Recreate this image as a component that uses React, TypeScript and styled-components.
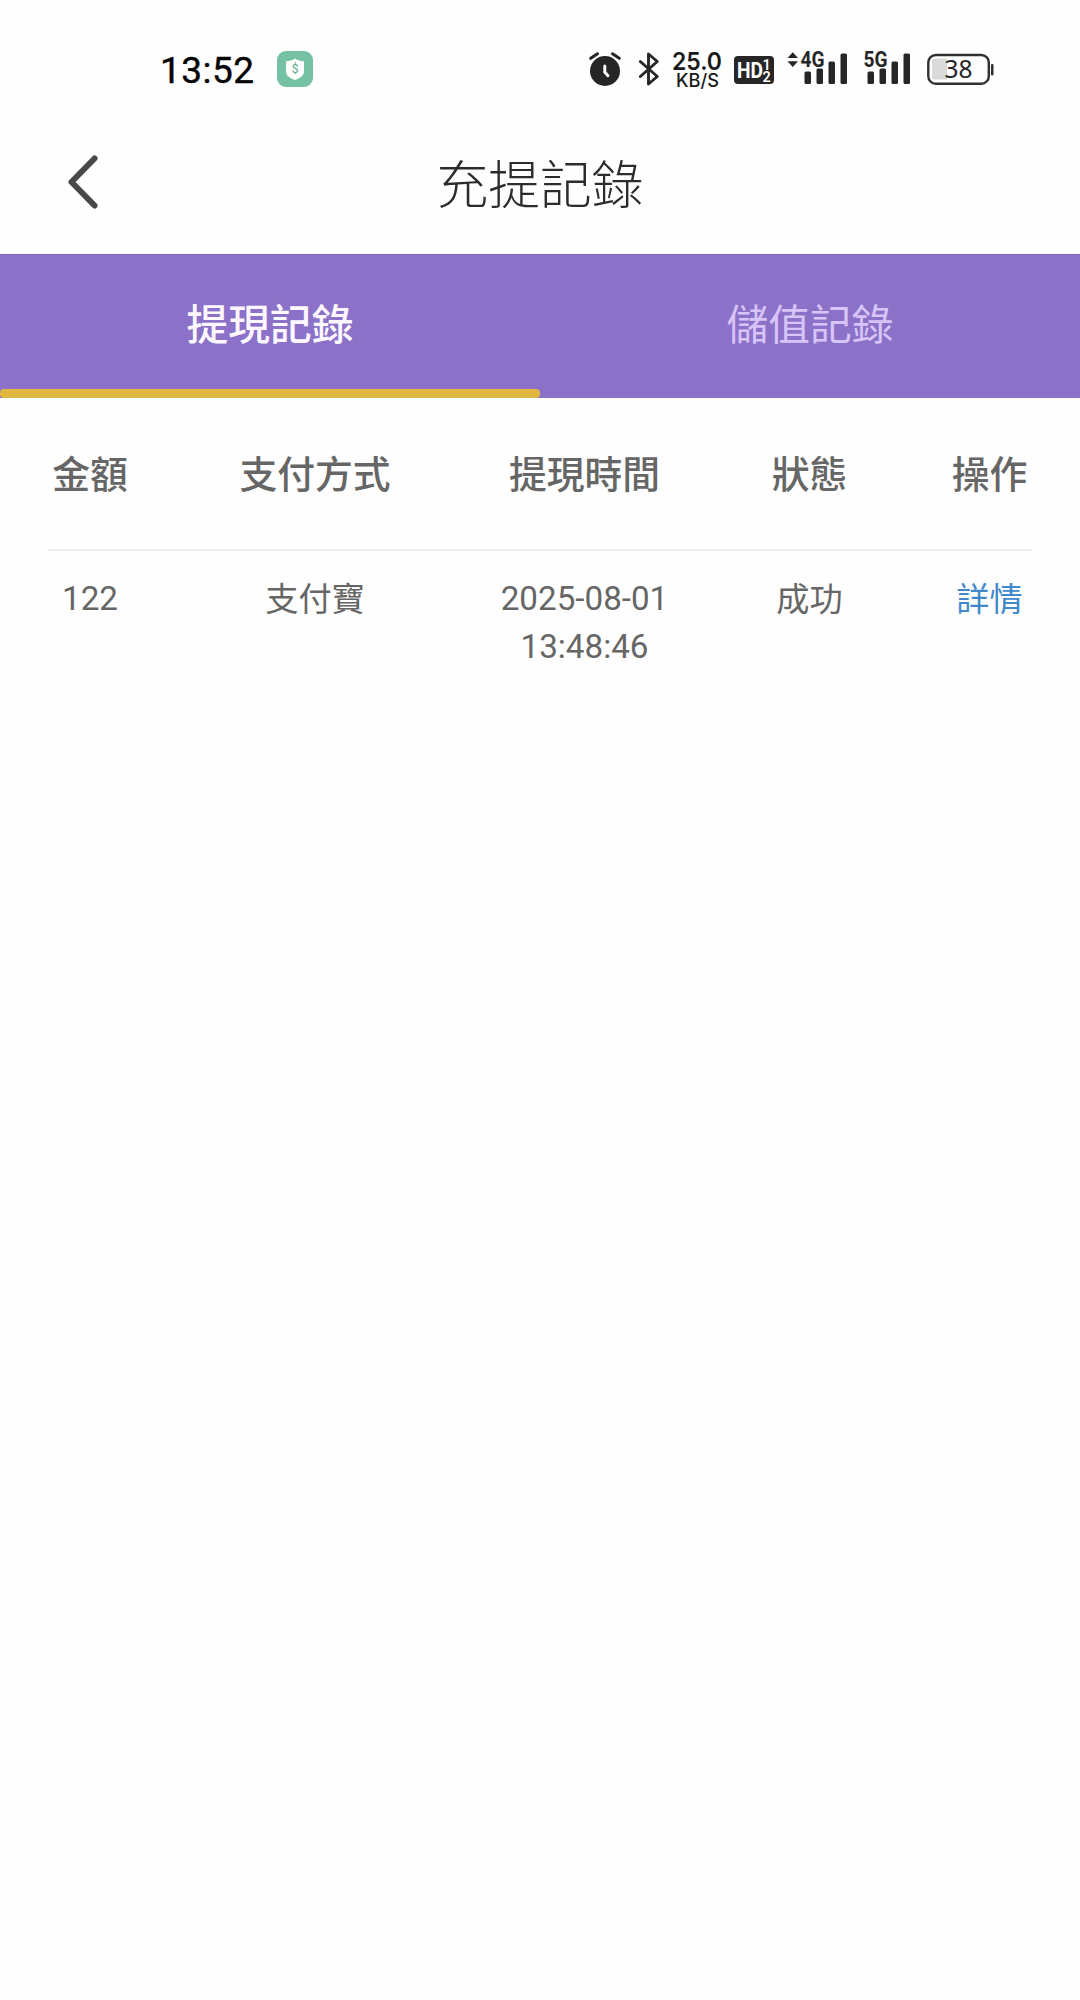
import React from "react";
import styled, { createGlobalStyle } from "styled-components";

const GlobalStyle = createGlobalStyle`
  * { box-sizing: border-box; }
  body {
    margin: 0;
    background: #fefefe;
    font-family: Roboto, "Noto Sans CJK TC", sans-serif;
  }
`;

const Screen = styled.div`
  width: 1080px;
  min-height: 2000px;
  background: #fefefe;
  display: flex;
  flex-direction: column;
`;

const StatusBar = styled.header`
  height: 104px;
  padding: 51px 86px 17px 161px;
  display: flex;
  justify-content: space-between;
  align-items: center;
  color: #1f1f1f;
`;

const StatusGroup = styled.div<{ $gap: number; $indent?: number }>`
  display: flex;
  align-items: center;
  height: 36px;
  gap: ${(p) => p.$gap}px;
  margin-left: ${(p) => p.$indent ?? 0}px;

  svg {
    display: block;
    flex: none;
    overflow: visible;
  }
`;

const NavBar = styled.div`
  height: 150px;
  padding: 0 67px;
  display: grid;
  grid-template-columns: 60px 1fr 60px;
  align-items: center;
`;

const BackButton = styled.button`
  width: 32px;
  height: 56px;
  margin-bottom: -6px;
  padding: 0;
  border: 0;
  background: none;

  svg {
    display: block;
  }
`;

const Title = styled.h1`
  margin: 15px 0 0;
  text-align: center;
  font-size: 51.8px;
  line-height: 76px;
  font-weight: 300;
  color: #2c2c2c;
`;

const Tabs = styled.nav`
  height: 144px;
  display: grid;
  grid-template-columns: 1fr 1fr;
  background: #8b71c7;
  border-top: 1px solid #8168b4;
`;

const Tab = styled.div<{ $active?: boolean }>`
  display: flex;
  flex-direction: column;
  justify-content: space-between;
  padding-top: 40px;
  text-align: center;
  font-size: 41.8px;
  line-height: 62px;
  font-weight: ${(p) => (p.$active ? 500 : 400)};
  color: ${(p) => (p.$active ? "#fdf8ff" : "#d7c4f8")};

  &::after {
    content: "";
    height: 9px;
    border-radius: 4px;
    background: ${(p) => (p.$active ? "#e0b840" : "transparent")};
  }
`;

const Table = styled.section`
  padding: 0 48px;
`;

const Row = styled.div`
  display: grid;
  grid-template-columns: 84px 366px 173px 277px 83px;
  text-align: center;
  color: #666;
`;

const HeadRow = styled(Row)`
  height: 153px;
  padding-top: 49px;
  border-bottom: 2px solid #f0f0f0;
  font-size: 37.8px;
  line-height: 56px;
  font-weight: 500;
  white-space: nowrap;
`;

const BodyRow = styled(Row)`
  padding-top: 24px;
  font-size: 33.2px;
  line-height: 48px;
`;

const Label = styled.span`
  padding-top: 1px;
`;

const DetailLink = styled.a`
  padding-top: 1px;
  color: #4189cb;
`;

const FACE = 'Roboto, "Noto Sans", sans-serif';

function ShieldBadge() {
  return (
    <svg width="36" height="36" viewBox="0 0 36 36">
      <rect width="36" height="36" rx="9" fill="#75c1a4" />
      <path d="M18 7.5c2.6 1.8 5.4 2.6 9 2.8v10c0 4.300-3.700 6.800-9 8.700-5.300-1.900-9-4.400-9-8.700v-10c3.600-.2 6.400-1 9-2.800z" fill="#fff" />
      <text x="18" y="22" textAnchor="middle" fontFamily={FACE} fontSize="12" fill="#55a883">$</text>
    </svg>
  );
}

function Clock() {
  return (
    <svg width="92" height="36" viewBox="0 0 92 36">
      <text x="-1" y="31.700" fontFamily={FACE} fontSize="37" fontWeight="400" fill="#050505" stroke="#050505" strokeWidth="0.400" textLength="94" lengthAdjust="spacing">13:52</text>
    </svg>
  );
}

function Alarm() {
  return (
    <svg width="32" height="36" viewBox="0 0 32 36" fill="none" strokeLinecap="round">
      <circle cx="16" cy="20" r="15" fill="#262626" />
      <path d="M1.700 7.300 8.500 2.800M23.500 2.800l6.800 4.500" stroke="#fefefe" strokeWidth="6" />
      <path d="M1.700 7.300 8.500 2.800M23.500 2.800l6.800 4.500" stroke="#262626" strokeWidth="3" />
      <path d="M15.800 15v6.200l3.200 3.500" stroke="#fff" strokeWidth="3" strokeLinejoin="round" />
    </svg>
  );
}

function Bluetooth() {
  return (
    <svg width="20" height="36" viewBox="0 0 20 36" fill="none" stroke="#262626" strokeWidth="2.900" strokeLinecap="round" strokeLinejoin="round">
      <path d="M1.300 10.500 18.300 25.500 9.500 33V3l8.800 7.500L1.300 25.500" />
    </svg>
  );
}

function NetSpeed() {
  return (
    <svg width="50" height="36" viewBox="0 0 50 36" fontFamily={'Inter, sans-serif'} fill="#1a1a1a">
      <text x="0" y="19.300" fontSize="24.500" fontWeight="600" textLength="50" lengthAdjust="spacingAndGlyphs">25.0</text>
      <text x="4" y="36" fontSize="18.500" fontWeight="500" textLength="43" lengthAdjust="spacingAndGlyphs">KB/S</text>
    </svg>
  );
}

function HdBadge() {
  return (
    <svg width="40" height="36" viewBox="0 0 40 36" fontFamily={FACE} fill="#fff">
      <rect y="5" width="40" height="28" rx="4" fill="#262626" />
      <text x="3" y="27" fontSize="22.500" fontWeight="700" textLength="26" lengthAdjust="spacingAndGlyphs">HD</text>
      <text x="28.500" y="19" fontSize="14.500" fontWeight="600">1</text>
      <text x="28.500" y="30.700" fontSize="14.500" fontWeight="600">2</text>
    </svg>
  );
}

function Signal({ label, arrows }: { label: string; arrows?: boolean }) {
  return (
    <svg width="47" height="36" viewBox="0 0 47 36" fill="#262626">
      {arrows && <path d="M-13.500 7h10.500L-8.250 1.200zM-13.500 10.300h10.500l-5.250 5.700z" />}
      <rect x="3.500" y="20.500" width="6.500" height="12.500" rx="1.500" />
      <rect x="15.500" y="17.500" width="6.500" height="15.500" rx="1.500" />
      <rect x="27.500" y="10.500" width="6.500" height="22.500" rx="1.500" />
      <rect x="39.500" y="2.500" width="6.500" height="30.500" rx="1.500" />
      <text x="-0.500" y="16.200" fontFamily={FACE} fontSize="21.500" fontWeight="700" stroke="#fefefe" strokeWidth="2" paintOrder="stroke" textLength="24" lengthAdjust="spacingAndGlyphs">{label}</text>
    </svg>
  );
}

function Battery() {
  return (
    <svg width="67" height="36" viewBox="0 0 67 36">
      <rect x="1.300" y="4" width="60.500" height="28.700" rx="7.500" fill="none" stroke="#303030" strokeWidth="2.400" />
      <path d="M8 7.500h12v21H8a3 3 0 0 1-3-3v-15a3 3 0 0 1 3-3z" fill="#dadada" />
      <rect x="64" y="13" width="2.500" height="11.500" rx="1" fill="#303030" />
      <text x="17.500" y="26.500" fontFamily={'"Noto Sans", sans-serif'} fontSize="24.500" fill="#262626" textLength="28" lengthAdjust="spacingAndGlyphs">38</text>
    </svg>
  );
}

const HEADINGS = ["金額", "支付方式", "提現時間", "狀態", "操作"];

export default function App() {
  return (
    <Screen>
      <GlobalStyle />
      <StatusBar>
        <StatusGroup $gap={24}>
          <Clock />
          <ShieldBadge />
        </StatusGroup>
        <StatusGroup $gap={13}>
          <StatusGroup $gap={18}>
            <Alarm />
            <Bluetooth />
          </StatusGroup>
          <StatusGroup $gap={12}>
            <NetSpeed />
            <HdBadge />
          </StatusGroup>
          <StatusGroup $gap={16} $indent={14}>
            <Signal label="4G" arrows />
            <Signal label="5G" />
            <Battery />
          </StatusGroup>
        </StatusGroup>
      </StatusBar>
      <NavBar>
        <BackButton aria-label="返回">
          <svg width="32" height="56" viewBox="0 0 32 56" fill="none" stroke="#484848" strokeWidth="6" strokeLinecap="round" strokeLinejoin="round">
            <path d="M27.500 4.500 4.500 28l23 23.500" />
          </svg>
        </BackButton>
        <Title>充提記錄</Title>
      </NavBar>
      <Tabs>
        <Tab $active>提現記錄</Tab>
        <Tab>儲值記錄</Tab>
      </Tabs>
      <Table>
        <HeadRow>
          {HEADINGS.map((h) => (
            <span key={h}>{h}</span>
          ))}
        </HeadRow>
        <BodyRow>
          <span>122</span>
          <Label>支付寶</Label>
          <span>2025-08-01 13:48:46</span>
          <Label>成功</Label>
          <DetailLink>詳情</DetailLink>
        </BodyRow>
      </Table>
    </Screen>
  );
}
